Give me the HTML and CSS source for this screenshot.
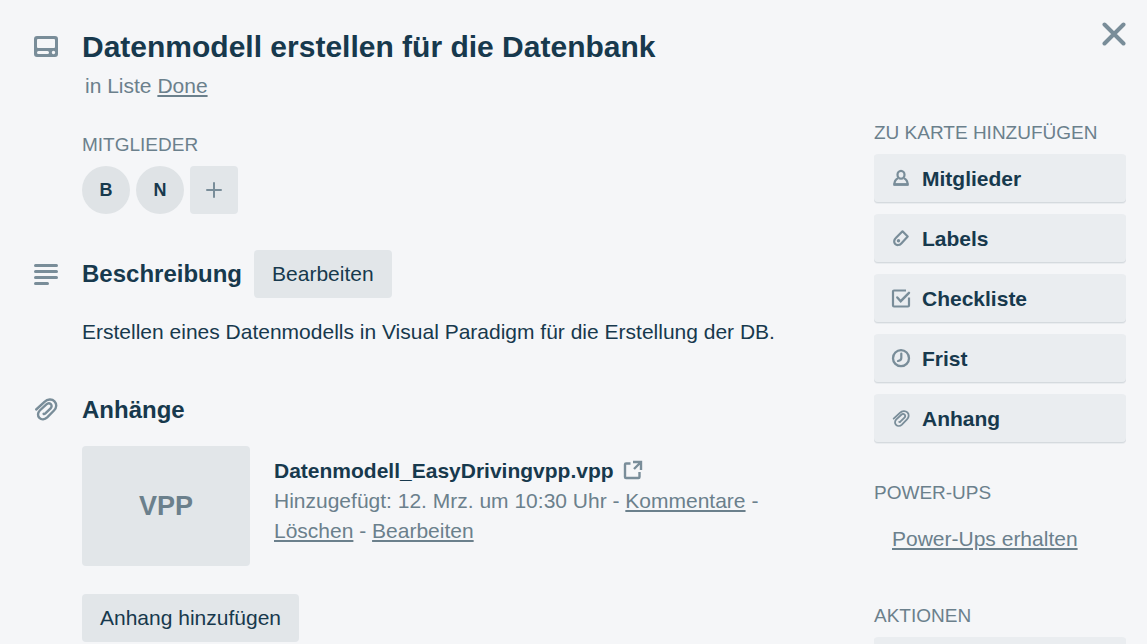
FILE: index.html
```html
<!DOCTYPE html>
<html lang="de">
<head>
<meta charset="utf-8">
<meta name="viewport" content="width=device-width, initial-scale=1">
<title>Datenmodell erstellen für die Datenbank</title>
<link rel="stylesheet" href="styles.css">
</head>
<body>
<svg class="sprite" aria-hidden="true">
  <symbol id="clip" viewBox="0 0 24 24">
    <path d="M2.200 11.500 10.500 3.800C13.500 1 18 .8 20.500 3.300s2.300 6.400-.5 9.200L13.200 19.400c-2.400 2.300-5.800 2.500-7.800.5s-1.800-5.200.4-7.400l6.600-6.200c1.400-1.300 3.200-1.400 4.400-.2s1 3-.2 4.200l-5.500 5.300c-.6.500-1.200.5-1.500.2" fill="none" stroke="currentColor" stroke-width="2.400" stroke-linecap="round" stroke-linejoin="round"/>
  </symbol>
</svg>
<div class="card">
  <header class="card-header">
    <svg class="icon" viewBox="0 0 24 24" aria-hidden="true"><path fill="currentColor" fill-rule="evenodd" d="M3 1h18a3 3 0 0 1 3 3v15a3 3 0 0 1-3 3H3a3 3 0 0 1-3-3V4a3 3 0 0 1 3-3ZM4 4a1 1 0 0 0-1 1v7a1 1 0 0 0 1 1h16a1 1 0 0 0 1-1V5a1 1 0 0 0-1-1ZM4.500 16a1.500 1.500 0 0 0 0 3h9a1.500 1.500 0 0 0 0-3ZM19.500 15.800a1.700 1.700 0 1 0 0 3.400 1.700 1.700 0 0 0 0-3.400Z"/></svg>
    <div>
      <h1 class="title">Datenmodell erstellen für die Datenbank</h1>
      <p class="list-name">in Liste <a href="#">Done</a></p>
    </div>
    <button class="close" type="button" aria-label="Schließen">
      <svg viewBox="0 0 24 24" aria-hidden="true"><path d="M2.500 2.500l19 19M21.500 2.500l-19 19" stroke="currentColor" stroke-width="4" stroke-linecap="round"/></svg>
    </button>
  </header>
  <div class="columns">
    <main class="main">
      <section class="members">
        <h2 class="caption">MITGLIEDER</h2>
        <div class="avatars">
          <span class="avatar">B</span>
          <span class="avatar">N</span>
          <button class="add" type="button" aria-label="Mitglied hinzufügen"><svg viewBox="0 0 16 16" aria-hidden="true"><path d="M8 1v14M1 8h14" stroke="currentColor" stroke-width="2" stroke-linecap="round"/></svg></button>
        </div>
      </section>
      <section class="section">
        <div class="section-head">
          <svg class="icon" viewBox="0 0 24 24" aria-hidden="true"><path d="M1.500 3.500h21M1.500 9.500h21M1.500 15.500h21M1.500 21.500h12" stroke="currentColor" stroke-width="3" stroke-linecap="round"/></svg>
          <h2 class="heading">Beschreibung</h2>
          <button class="button" type="button">Bearbeiten</button>
        </div>
        <p class="description">Erstellen eines Datenmodells in Visual Paradigm für die Erstellung der DB.</p>
      </section>
      <section class="section">
        <div class="section-head">
          <svg class="icon" aria-hidden="true"><use href="#clip"/></svg>
          <h2 class="heading">Anhänge</h2>
        </div>
        <div class="attachment">
          <div class="thumb">VPP</div>
          <div class="details">
            <p class="file">Datenmodell_EasyDrivingvpp.vpp <svg class="external" viewBox="0 0 20 20" aria-hidden="true"><path d="M7.500 3.500H3a1 1 0 0 0-1 1V17a1 1 0 0 0 1 1h12.500a1 1 0 0 0 1-1v-5M10 2h8v8M17.500 2.500 11 9" fill="none" stroke="currentColor" stroke-width="2.400"/></svg></p>
            <p>Hinzugefügt: 12. Mrz. um 10:30 Uhr - <a href="#">Kommentare</a> - <a href="#">Löschen</a> - <a href="#">Bearbeiten</a></p>
          </div>
        </div>
        <button class="button attach" type="button">Anhang hinzufügen</button>
      </section>
    </main>
    <aside class="sidebar">
      <section>
        <h2 class="caption">ZU KARTE HINZUFÜGEN</h2>
        <div class="actions">
          <button class="action" type="button"><svg viewBox="0 0 20 20" aria-hidden="true"><g fill="none" stroke="currentColor" stroke-width="2.200" stroke-linejoin="round"><ellipse cx="10" cy="5.800" rx="3.500" ry="3.900"/><path d="M7 9.300c-2.300 1-3.600 3-3.600 6.200h13.200c0-3.200-1.300-5.200-3.600-6.200"/></g><path d="M2.400 15.500h15.200" stroke="currentColor" stroke-width="2.600"/></svg>Mitglieder</button>
          <button class="action" type="button"><svg viewBox="0 0 20 20" aria-hidden="true"><path fill="none" stroke="currentColor" stroke-width="2.200" stroke-linejoin="round" d="M11.500 2.300 16.700 7.500l-6.400 6.900c-1.900 2-4.600 2.100-6.100.6s-1.400-4.100.6-6Z"/><circle cx="7.500" cy="11.800" r="1.700" fill="currentColor"/></svg>Labels</button>
          <button class="action" type="button"><svg viewBox="0 0 20 20" aria-hidden="true"><path fill="none" stroke="currentColor" stroke-width="2.200" stroke-linejoin="round" d="M15 1.500H3a1 1 0 0 0-1 1v14a1 1 0 0 0 1 1h14a1 1 0 0 0 1-1V8.500"/><path fill="none" stroke="currentColor" stroke-width="2.400" stroke-linecap="round" d="m6.300 8.500 3.400 3.700L18 3.800"/></svg>Checkliste</button>
          <button class="action" type="button"><svg viewBox="0 0 20 20" aria-hidden="true"><circle cx="10" cy="9.200" r="8" fill="none" stroke="currentColor" stroke-width="2.300"/><path fill="none" stroke="currentColor" stroke-width="2.200" stroke-linecap="round" d="M10.300 4.500V9c0 1.500-.8 2.500-3.300 3"/></svg>Frist</button>
          <button class="action" type="button"><svg class="small-clip" aria-hidden="true"><use href="#clip"/></svg>Anhang</button>
        </div>
      </section>
      <section class="group">
        <h2 class="caption">POWER-UPS</h2>
        <a class="power-ups" href="#">Power-Ups erhalten</a>
      </section>
      <section class="group">
        <h2 class="caption">AKTIONEN</h2>
        <div class="actions"><button class="action" type="button"></button></div>
      </section>
    </aside>
  </div>
</div>
</body>
</html>
```
FILE: styles.css
```css
* { box-sizing: border-box; }

body {
  height: 100vh;
  margin: 0;
  overflow: hidden;
  background: #f5f6f8;
  color: #17394d;
  font: 21px/30px "Liberation Sans", Arial, sans-serif;
}

h1, h2, p { margin: 0; }
button { border: 0; color: inherit; font: inherit; cursor: pointer; }
svg { display: block; flex: none; }
a { color: inherit; text-decoration-thickness: 2px; text-underline-offset: 2px; }

.sprite { position: absolute; width: 0; height: 0; }
.icon { width: 24px; height: 24px; color: #798d99; }

.card { padding: 20px 21px 0 34px; }

.card-header {
  display: grid;
  grid-template-columns: 24px 1fr 24px;
  gap: 24px;
}
.card-header .icon { margin-top: 15px; }
.title { padding-top: 9px; font-size: 30px; line-height: 36px; }
.list-name { padding: 6px 0 0 3px; color: #6b808c; }

.close {
  width: 24px;
  height: 24px;
  margin-top: 2px;
  padding: 0;
  background: none;
  color: #798d99;
}
.close svg { width: 24px; height: 24px; }

.columns {
  display: grid;
  grid-template-columns: minmax(0, 1fr) 252px;
  gap: 48px;
  padding-top: 17px;
}

.caption {
  margin-bottom: 6px;
  color: #6b808c;
  font-size: 19px;
  font-weight: 400;
  line-height: 30px;
}

.members { padding: 12px 0 0 48px; }
.avatars { display: flex; gap: 6px; }
.avatar, .add {
  display: grid;
  width: 48px;
  height: 48px;
  place-items: center;
}
.avatar {
  border-radius: 50%;
  background: #dfe3e6;
  font-size: 18px;
  font-weight: 700;
}
.add {
  padding: 0;
  border-radius: 4px;
  background: #e2e6e9;
  color: #798d99;
}
.add svg { width: 16px; height: 16px; }

.section { padding-top: 36px; }
.section-head { display: flex; align-items: center; }
.section-head .icon { margin-right: 24px; }
.heading { margin-right: 12px; font-size: 24px; line-height: 36px; }
.button {
  height: 48px;
  padding: 0 18px;
  border-radius: 4px;
  background: #e2e6e9;
}
.description { padding: 19px 0 9px 48px; }

.attachment { display: flex; gap: 24px; padding: 18px 0 28px 48px; }
.thumb {
  display: grid;
  flex: none;
  width: 168px;
  height: 120px;
  place-items: center;
  border-radius: 4px;
  background: #e2e6e9;
  color: #6b808c;
  font-size: 27px;
  font-weight: 700;
}
.details { padding-top: 10px; color: #6b808c; }
.file { color: #17394d; font-weight: 700; }
.external {
  display: inline-block;
  width: 20px;
  height: 20px;
  margin-left: 4px;
  vertical-align: -2px;
  color: #798d99;
}
.attach { margin-left: 48px; }

.actions { display: grid; gap: 11px; }
.action {
  display: flex;
  align-items: center;
  gap: 11px;
  height: 49px;
  padding: 0 17px;
  border-radius: 4px;
  background: #eaedf0;
  box-shadow: inset 0 -1px 0 #d5dade, 0 1px 0 #e9ecef;
  font-weight: 700;
  text-align: left;
}
.action svg { width: 20px; height: 20px; color: #798d99; }
.action .small-clip { padding: 1px; }
.group { padding-top: 35px; }
.power-ups {
  display: block;
  width: fit-content;
  margin: 16px 18px 12px;
  color: #6b808c;
}
```
